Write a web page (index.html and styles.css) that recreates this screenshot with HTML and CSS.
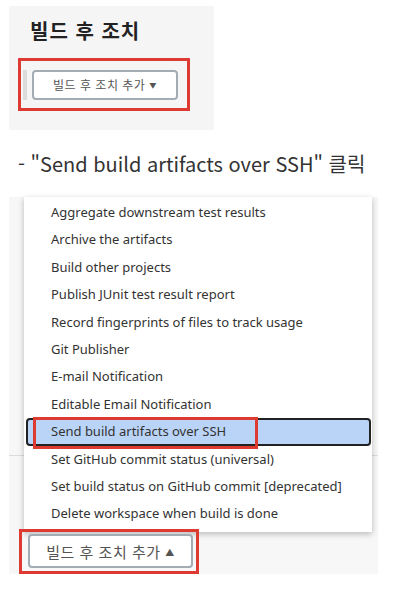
FILE: index.html
```html
<!DOCTYPE html>
<html lang="ko">
<head>
<meta charset="utf-8">
<link rel="stylesheet" href="styles.css">
</head>
<body>
<section class="shot-top">
  <h2 class="heading">빌드 후 조치</h2>
  <div class="red-box red-top">
    <span class="strip"></span>
    <button class="add-btn small">빌드 후 조치 추가 <span class="tri">▼</span></button>
  </div>
</section>
<p class="caption">- "Send build artifacts over SSH" 클릭</p>
<section class="shot-bottom">
  <ul class="menu">
    <li class="item">Aggregate downstream test results</li>
    <li class="item">Archive the artifacts</li>
    <li class="item">Build other projects</li>
    <li class="item">Publish JUnit test result report</li>
    <li class="item">Record fingerprints of files to track usage</li>
    <li class="item">Git Publisher</li>
    <li class="item">E-mail Notification</li>
    <li class="item">Editable Email Notification</li>
    <li class="item active">Send build artifacts over SSH<span class="mark"></span></li>
    <li class="item">Set GitHub commit status (universal)</li>
    <li class="item">Set build status on GitHub commit [deprecated]</li>
    <li class="item">Delete workspace when build is done</li>
  </ul>
  <div class="red-box red-bottom">
    <button class="add-btn big">빌드 후 조치 추가 <span class="tri">▲</span></button>
  </div>
</section>
</body>
</html>
```

FILE: styles.css
```css
* { box-sizing: border-box; }
body {
  margin: 0;
  background: #fff;
  font-family: "Noto Sans CJK KR", "Noto Sans", sans-serif;
  color: #333;
}
.shot-top {
  margin: 6px 0 0 9px;
  width: 205px;
  height: 124px;
  background: #f5f5f5;
  padding: 12px 0 0 9px;
}
.heading {
  margin: 0 0 0 12px;
  font-size: 20px;
  line-height: 26px;
  font-weight: 700;
  letter-spacing: 1px;
  color: #222;
}
.red-box {
  border: 3px solid #dd3a32;
  display: flex;
  align-items: center;
}
.red-top {
  margin-top: 14px;
  width: 172px;
  height: 53px;
  padding-left: 2px;
  gap: 5px;
}
.strip {
  width: 4px;
  height: 30px;
  background: #dcdcdc;
}
.add-btn {
  background: #fff;
  border: 2px solid #a3abb3;
  border-radius: 4px;
  font-family: "Noto Sans CJK KR", sans-serif;
  color: #555;
  padding: 0;
}
.add-btn.small {
  width: 146px;
  height: 30px;
  font-size: 12px;
  letter-spacing: 0.5px;
}
.tri { font-size: 0.6em; vertical-align: 2px; }
.caption {
  margin: 19px 0 0 18px;
  font-size: 20px;
  line-height: 30px;
  color: #333;
}
.shot-bottom {
  margin: 18px 0 0 9px;
  width: 369px;
  height: 377px;
  background: #f7f7f7 linear-gradient(#dcdcdc, #dcdcdc) 0 258px / 100% 1px no-repeat;
  padding-left: 15px;
}
.menu {
  list-style: none;
  margin: 0;
  width: 348px;
  padding: 2px 0 4px;
  background: #fff;
  box-shadow: 0 2px 6px rgba(0,0,0,0.25);
  font-family: "Noto Sans", sans-serif;
  font-size: 13px;
  color: #333;
}
.item {
  height: 27.4px;
  line-height: 27.4px;
  padding-left: 27px;
  position: relative;
}
.item.active {
  background: #bad4f7;
  border: 2px solid #222;
  border-radius: 4px;
  margin: 0 1px 0 2px;
  padding-left: 23px;
  line-height: 23.4px;
}
.mark {
  position: absolute;
  left: 5px;
  top: -3px;
  width: 225px;
  height: 32px;
  border: 3px solid #dd3a32;
}
.red-bottom {
  margin: -3px 0 0 -5px;
  width: 180px;
  height: 45px;
  padding-left: 6px;
}
.add-btn.big {
  width: 165px;
  height: 34px;
  font-size: 15px;
  letter-spacing: 0.5px;
}
```
